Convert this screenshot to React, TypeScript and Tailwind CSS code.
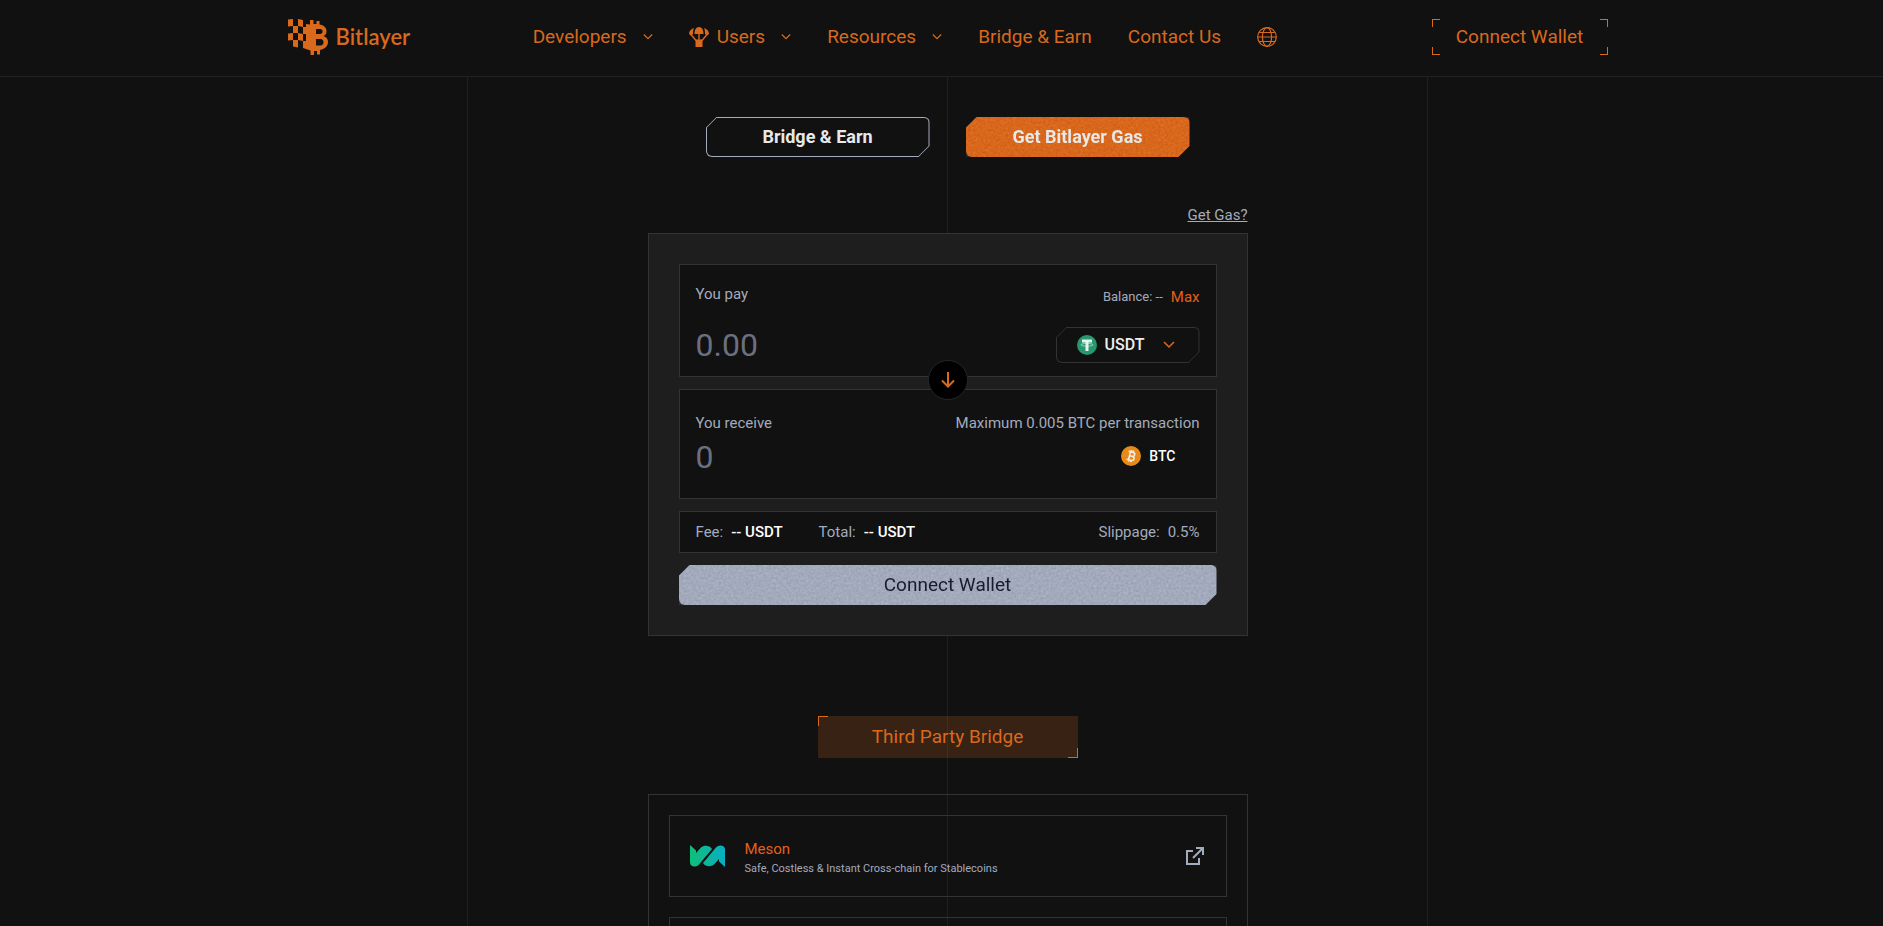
const CUT = 'rounded-[6px] [clip-path:polygon(11px_0,100%_0,100%_calc(100%_-_11px),calc(100%_-_11px)_100%,0_100%,0_11px)]'
const CUT_INNER = 'rounded-[5px] [clip-path:polygon(10px_0,100%_0,100%_calc(100%_-_10px),calc(100%_-_10px)_100%,0_100%,0_10px)]'

const Chevron = ({ className }: { className: string }) => (
    <svg viewBox="0 0 12 8" fill="none" stroke="currentColor" strokeWidth="1.5" className={className}>
        <path d="M1 1l5 5 5-5" />
    </svg>
)

const Grain = () => (
    <svg className="absolute inset-0 h-full w-full opacity-20 mix-blend-overlay" aria-hidden="true">
        <filter id="grain" x="0" y="0" width="100%" height="100%" colorInterpolationFilters="sRGB">
            <feTurbulence type="fractalNoise" baseFrequency="0.4" numOctaves="3" />
            <feColorMatrix values="1 0 0 0 -.05  1 0 0 0 -.05  1 0 0 0 -.05  0 0 0 0 1" />
        </filter>
        <rect width="100%" height="100%" filter="url(#grain)" />
    </svg>
)

const Logo = () => (
    <a href="#" className="flex items-center gap-2 text-[#d9691c]">
        <svg viewBox="0 0 40 36" fill="currentColor" className="h-9 w-10">
            <path d="M0 .5L5 0v7l-5 .5zM10 0l5 1v7l-5-1zM5 7l5 0v7l-5 0zM0 14.500l5-.5v7l-5 .5zM10 14l5 1v7l-5-1zM5 21l5 0v7.500l-5-1z" />
            <path fillRule="evenodd" d="M15 8h3V5l4 .5V1h3.500v4h3V2h3v3.500c4 .5 7 3 7 6.500 0 3-1 4-3 5 3 1 4.500 3 4.500 6 0 4-3 7-8 8v4.500h-3V32h-3v4h-3.500v-4.500L15 29v-7h3v-7h-3zM28 10v5h4c3.500 0 3.500-5 0-5zM28 20v6.500h4.500c4 0 4-6.500 0-6.500z" />
        </svg>
        <span className="font-['Lato'] text-[22px] font-semibold leading-7">Bitlayer</span>
    </a>
)

const Airdrop = () => (
    <svg viewBox="0 0 20 20" fill="currentColor" className="h-5 w-5">
        <path d="M5.500 7C5.500 3 7 0 10 0s4.500 3 4.500 7zM5 1C2 2 0 4 0 7l2 1.500L4 7c0-2 0-4 1-6zM15 1c3 1 5 3 5 6l-2 1.500L16 7c0-2 0-4-1-6zM6.500 12.500h7V20h-7z" />
        <path d="M1.500 7l6 7M18.500 7l-6 7M10 6v7" fill="none" stroke="currentColor" strokeWidth="1.4" />
    </svg>
)

const Globe = () => (
    <svg viewBox="0 0 20 20" fill="none" stroke="currentColor" strokeWidth="1.2" className="h-5 w-5">
        <circle cx="10" cy="10" r="9.3" />
        <ellipse cx="10" cy="10" rx="4.6" ry="9.3" />
        <path d="M2 5.500h16M.7 10h18.6M2 14.500h16" />
    </svg>
)

const Corner = ({ className }: { className: string }) => <i className={`absolute border-[#d9691c] ${className}`} />

const Header = () => (
    <header className="relative h-[77px] border-b border-[#222224]">
        <div className="mx-auto flex h-[74px] max-w-[1320px] items-center justify-between text-[19px] leading-6 text-[#d9691c]">
            <Logo />
            <nav className="mr-8 flex items-center gap-9">
                <a href="#" className="flex items-center gap-4">Developers<Chevron className="h-2 w-[10px]" /></a>
                <a href="#" className="flex items-center gap-4">
                    <span className="flex items-center gap-2"><Airdrop />Users</span>
                    <Chevron className="h-2 w-[10px]" />
                </a>
                <a href="#" className="flex items-center gap-4">Resources<Chevron className="h-2 w-[10px]" /></a>
                <a href="#">Bridge &amp; Earn</a>
                <a href="#">Contact Us</a>
                <button aria-label="Language"><Globe /></button>
            </nav>
            <button className="relative h-9 w-44">
                <Corner className="left-0 top-0 h-2 w-2 border-l border-t" />
                <Corner className="right-0 top-0 h-2 w-2 border-r border-t" />
                <Corner className="bottom-0 left-0 h-2 w-2 border-b border-l" />
                <Corner className="bottom-0 right-0 h-2 w-2 border-b border-r" />
                Connect Wallet
            </button>
        </div>
    </header>
)

const Tether = () => (
    <svg viewBox="0 0 20 20" className="h-5 w-5">
        <circle cx="10" cy="10" r="10" fill="#26976f" />
        <path d="M5 4.500h10v3h-3.500V16h-3V7.500H5z" fill="#e8f2ee" />
        <ellipse cx="10" cy="9.800" rx="6" ry="1.400" fill="none" stroke="#e8f2ee" strokeWidth=".6" />
    </svg>
)

const Bitcoin = () => (
    <svg viewBox="0 0 20 20" className="h-5 w-5">
        <circle cx="10" cy="10" r="10" fill="#e88a1a" />
        <g transform="rotate(14 10 10)" fill="none" stroke="#f5ede3" strokeWidth="1.600">
            <path d="M6.500 6h4.500c3 0 3 4 0 4H8.500M11 10c3.500 0 3.500 4.200 0 4.200H6.500M8.500 6v8.200M9 4v2M11.200 4v2M9 14v2M11.200 14v2" />
        </g>
    </svg>
)

const Meson = () => (
    <svg viewBox="0 0 35 22" className="h-[22px] w-[35px]">
        <defs>
            <linearGradient id="meson" gradientUnits="userSpaceOnUse" x1="0" y1="0" x2="35" y2="0">
                <stop offset="0" stopColor="#0fbf78" />
                <stop offset="1" stopColor="#08afc4" />
            </linearGradient>
        </defs>
        <g fill="url(#meson)">
            <path d="M0 0L6 5.500V8L11 2.500C14 0 19.500 0 22 4L9 19.500C6 23 0 22 0 17.500z" />
            <path d="M35 22L29 16.500V14L24 19.500C21 22 15.500 22 13 18L26 2.500C29-1 35 0 35 4.500z" />
        </g>
    </svg>
)

const ExternalLink = () => (
    <svg viewBox="0 0 18 18" fill="none" stroke="#a4abbd" strokeWidth="2" className="h-[18px] w-[18px]">
        <path d="M7 4H1v13h12v-6M10 1h7v7M17 1L7 11" />
    </svg>
)

const Swap = () => (
    <form className="flex flex-col gap-3 border border-[#333] bg-[#1e1e1e] p-[30px] text-[15px] leading-5 text-[#a4abbd]">
        <div className="relative flex h-[113px] justify-between border border-[#333] bg-[#111] px-4 pb-[13px] pt-[19px]">
            <div className="flex flex-col justify-between">
                <label htmlFor="pay">You pay</label>
                <input id="pay" placeholder="0.00" className="h-9 w-60 bg-transparent text-[32px] leading-9 outline-none placeholder:text-[#6b7080]" />
            </div>
            <div className="flex flex-col items-end justify-between">
                <div className="flex items-center gap-2 pt-[3px]">
                    <span className="text-[13px]">Balance: --</span>
                    <button type="button" className="text-[#e5601a]">Max</button>
                </div>
                <div className={`h-9 w-36 bg-[#333] p-px ${CUT}`}>
                    <label className={`relative flex h-full items-center gap-2 bg-[#111] pl-5 ${CUT_INNER}`}>
                        <Tether />
                        <select aria-label="Token" className="w-[90px] appearance-none bg-transparent text-base font-medium leading-5 text-[#eee] outline-none">
                            <option>USDT</option>
                        </select>
                        <Chevron className="pointer-events-none absolute right-6 h-2 w-3 text-[#e06a1a]" />
                    </label>
                </div>
            </div>
            <button type="button" aria-label="Switch direction" className="absolute left-1/2 top-full z-10 flex h-10 w-10 -translate-x-1/2 -translate-y-4 items-center justify-center rounded-full border border-[#262626] bg-black">
                <svg viewBox="0 0 16 16" fill="none" stroke="#d9691c" strokeWidth="2" className="h-4 w-4">
                    <path d="M8 0v15M2 8.500l6 6 6-6" />
                </svg>
            </button>
        </div>
        <div className="flex h-[110px] justify-between border border-[#333] bg-[#111] px-4 pt-[23px]">
            <div className="flex flex-col gap-[6px]">
                <label htmlFor="receive">You receive</label>
                <input id="receive" placeholder="0" readOnly className="h-9 w-40 bg-transparent text-[32px] leading-9 outline-none placeholder:text-[#6b7080]" />
            </div>
            <div className="flex flex-col items-end gap-[13px]">
                <span>Maximum 0.005 BTC per transaction</span>
                <span className="flex items-center gap-2 pr-6 text-sm font-medium leading-5 text-white"><Bitcoin />BTC</span>
            </div>
        </div>
        <div className="flex h-[42px] items-center border border-[#333] bg-[#111] px-4">
            <span>Fee:</span>
            <span className="pl-2 font-medium text-white">-- USDT</span>
            <span className="pl-9">Total:</span>
            <span className="pl-2 font-medium text-white">-- USDT</span>
            <span className="ml-auto">Slippage:</span>
            <span className="pl-2">0.5%</span>
        </div>
        <button type="button" className={`relative h-10 bg-[#a4abbd] text-[19px] text-[#191c2c] ${CUT}`}>
            <Grain />
            <span className="relative">Connect Wallet</span>
        </button>
    </form>
)

const App = () => {
    return (
        <div className="relative h-screen overflow-hidden bg-[#111] pl-3 font-['Roboto',sans-serif]">
            <div className="absolute inset-y-0 left-3 right-0 flex justify-center">
                <div className="mt-[77px] grid w-[961px] grid-cols-2 border-x border-[#1f1f20]">
                    <div className="border-r border-[#1f1f20]" />
                </div>
            </div>
            <div className="absolute inset-x-0 top-0 h-[77px] border-b border-[#222224]" />
            <Header />
            <main className="relative mx-auto flex w-full max-w-[600px] flex-col pt-10">
                <div className="flex justify-center gap-9 text-lg font-bold leading-6 text-[#e8e8e8]">
                    <button className={`h-10 w-56 bg-[#a4abbd] p-px ${CUT}`}>
                        <span className={`flex h-full items-center justify-center bg-[#111] ${CUT_INNER}`}>Bridge &amp; Earn</span>
                    </button>
                    <button className={`relative h-10 w-56 bg-[#d9691c] ${CUT}`}>
                        <Grain />
                        <span className="relative">Get Bitlayer Gas</span>
                    </button>
                </div>
                <a href="#" className="mb-2 mt-12 self-end text-[15px] leading-5 text-[#a4abbd] underline">Get Gas?</a>
                <Swap />
                <h2 className="relative mt-20 flex h-[42px] w-[260px] items-center justify-center self-center bg-[#d9691c]/20 text-[19px] text-[#d9691c]">
                    <Corner className="left-0 top-0 h-[10px] w-[10px] border-l border-t" />
                    <Corner className="bottom-0 right-0 h-[10px] w-[10px] border-b border-r" />
                    Third Party Bridge
                </h2>
                <ul className="mt-9 flex flex-col gap-5 border border-[#333] p-5">
                    <li className="h-[82px] border border-[#333]">
                        <a href="#" className="flex h-full items-center gap-5 pl-5 pr-[22px]">
                            <Meson />
                            <span className="flex flex-1 flex-col gap-0.5 pt-1">
                                <span className="text-[15px] leading-5 text-[#e5601a]">Meson</span>
                                <span className="text-[11px] leading-4 text-[#a4abbd]">Safe, Costless &amp; Instant Cross-chain for Stablecoins</span>
                            </span>
                            <ExternalLink />
                        </a>
                    </li>
                    <li className="h-[82px] border border-[#333]" />
                </ul>
            </main>
        </div>
    )
}
export default App
